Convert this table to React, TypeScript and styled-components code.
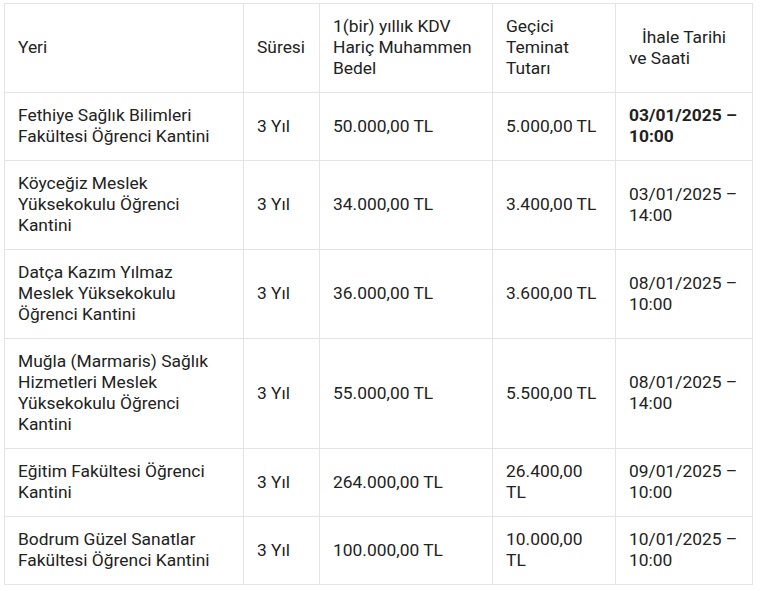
import styled, { createGlobalStyle } from "styled-components";

const GlobalStyle = createGlobalStyle`
  body {
    margin: 0;
    background: #ffffff;
    font-family: Roboto, "Liberation Sans", Arial, sans-serif;
    color: #222222;
  }
`;

const Page = styled.div`
  padding: 3px 4px;
`;

const Table = styled.table`
  width: 749px;
  table-layout: fixed;
  border-collapse: collapse;
  font-size: 17.4px;
  line-height: 21px;
`;

const Col = styled.col<{ $w: number }>`
  width: ${(p) => p.$w}px;
`;

const Cell = styled.td<{ $bold?: boolean }>`
  border: 1px solid #e4e4e4;
  padding: 12px 13px 13px;
  vertical-align: middle;
  text-align: left;
  font-weight: ${(p) => (p.$bold ? 700 : 400)};
`;

const HeadCell = styled(Cell).attrs({ as: "th" })``;

type Row = {
  yer: string;
  sure: string;
  bedel: string;
  teminat: string;
  tarih: string;
  bold?: boolean;
};

const rows: Row[] = [
  {
    yer: "Fethiye Sağlık Bilimleri Fakültesi Öğrenci Kantini",
    sure: "3 Yıl",
    bedel: "50.000,00 TL",
    teminat: "5.000,00 TL",
    tarih: "03/01/2025 – 10:00",
    bold: true,
  },
  {
    yer: "Köyceğiz Meslek Yüksekokulu Öğrenci Kantini",
    sure: "3 Yıl",
    bedel: "34.000,00 TL",
    teminat: "3.400,00 TL",
    tarih: "03/01/2025 – 14:00",
  },
  {
    yer: "Datça Kazım Yılmaz Meslek Yüksekokulu Öğrenci Kantini",
    sure: "3 Yıl",
    bedel: "36.000,00 TL",
    teminat: "3.600,00 TL",
    tarih: "08/01/2025 – 10:00",
  },
  {
    yer: "Muğla (Marmaris) Sağlık Hizmetleri Meslek Yüksekokulu Öğrenci Kantini",
    sure: "3 Yıl",
    bedel: "55.000,00 TL",
    teminat: "5.500,00 TL",
    tarih: "08/01/2025 – 14:00",
  },
  {
    yer: "Eğitim Fakültesi Öğrenci Kantini",
    sure: "3 Yıl",
    bedel: "264.000,00 TL",
    teminat: "26.400,00 TL",
    tarih: "09/01/2025 – 10:00",
  },
  {
    yer: "Bodrum Güzel Sanatlar Fakültesi Öğrenci Kantini",
    sure: "3 Yıl",
    bedel: "100.000,00 TL",
    teminat: "10.000,00 TL",
    tarih: "10/01/2025 – 10:00",
  },
];

export default function App() {
  return (
    <Page>
      <GlobalStyle />
      <Table>
        <colgroup>
          <Col $w={239} />
          <Col $w={76} />
          <Col $w={173} />
          <Col $w={123} />
          <Col $w={137} />
        </colgroup>
        <thead>
          <tr>
            <HeadCell>Yeri</HeadCell>
            <HeadCell>Süresi</HeadCell>
            <HeadCell>1(bir) yıllık KDV Hariç Muhammen Bedel</HeadCell>
            <HeadCell>Geçici Teminat Tutarı</HeadCell>
            <HeadCell>{"\u00a0\u00a0\u00a0İhale Tarihi ve Saati"}</HeadCell>
          </tr>
        </thead>
        <tbody>
          {rows.map((r) => (
            <tr key={r.yer}>
              <Cell>{r.yer}</Cell>
              <Cell>{r.sure}</Cell>
              <Cell>{r.bedel}</Cell>
              <Cell>{r.teminat}</Cell>
              <Cell $bold={r.bold}>{r.tarih}</Cell>
            </tr>
          ))}
        </tbody>
      </Table>
    </Page>
  );
}
